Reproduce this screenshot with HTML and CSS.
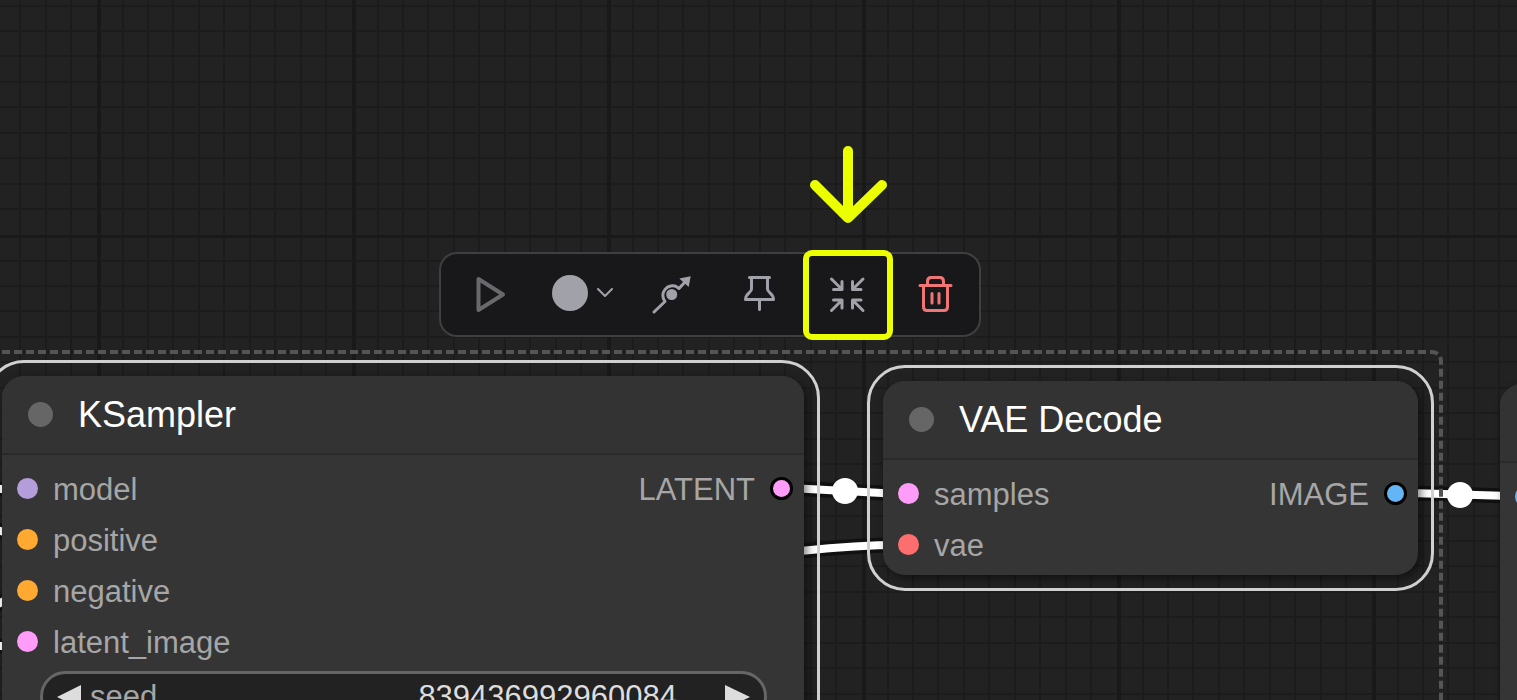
FILE: index.html
```html
<!DOCTYPE html>
<html lang="en">
<head>
<meta charset="utf-8">
<title>Node graph</title>
<link rel="stylesheet" href="styles.css">
</head>
<body>
<main class="canvas">
  <svg class="layer" aria-hidden="true">
    <defs>
      <pattern id="grid" x="97" y="235" width="255" height="255" patternUnits="userSpaceOnUse">
        <path class="grid-minor" d="M26 0V255M51 0V255M76 0V255M102 0V255M127 0V255M153 0V255M178 0V255M204 0V255M229 0V255M0 26H255M0 51H255M0 76H255M0 102H255M0 127H255M0 153H255M0 178H255M0 204H255M0 229H255"/>
        <path class="grid-major" d="M2 0V255M0 1H255"/>
      </pattern>
    </defs>
    <rect width="100%" height="100%" fill="url(#grid)"/>
    <g class="link-edge">
      <path d="M790 488L900 494M790 552C820 549 850 545 900 545M1410 493L1510 496M-10 489H8M-10 528L8 533M-10 608L8 599M-10 646H8"/>
    </g>
    <g class="link">
      <path d="M790 488L900 494M790 552C820 549 850 545 900 545M1410 493L1510 496M-10 489H8M-10 528L8 533M-10 608L8 599M-10 646H8"/>
    </g>
    <path class="group-outline" d="M-10 352H1431Q1441 352 1441 362V1200"/>
    <circle cx="845" cy="491" r="13" fill="#fff"/>
    <circle cx="1460" cy="495" r="13" fill="#fff"/>
  </svg>

  <section class="node node-sampler selected">
    <h2 class="node-title"><span class="state"></span>KSampler</h2>
    <div class="slots">
      <ul class="inputs">
        <li><span class="dot model"></span>model</li>
        <li><span class="dot conditioning"></span>positive</li>
        <li><span class="dot conditioning"></span>negative</li>
        <li><span class="dot latent"></span>latent_image</li>
      </ul>
      <ul class="outputs">
        <li>LATENT<span class="dot latent linked"></span></li>
      </ul>
    </div>
    <div class="widget">
      <button class="step" type="button" aria-label="Decrease seed"><svg width="26" height="26" viewBox="0 0 26 26"><path d="M1 13L25 1V25Z"/></svg></button>
      <label for="seed">seed</label>
      <input id="seed" type="text" value="839436992960084">
      <button class="step" type="button" aria-label="Increase seed"><svg width="26" height="26" viewBox="0 0 26 26"><path d="M25 13L0 1V25Z"/></svg></button>
    </div>
  </section>

  <section class="node node-decode selected">
    <h2 class="node-title"><span class="state"></span>VAE Decode</h2>
    <div class="slots">
      <ul class="inputs">
        <li><span class="dot latent"></span>samples</li>
        <li><span class="dot vae"></span>vae</li>
      </ul>
      <ul class="outputs">
        <li>IMAGE<span class="dot image linked"></span></li>
      </ul>
    </div>
  </section>

  <section class="node node-next">
    <div class="node-title"></div>
    <div class="slots"><ul class="inputs"><li><span class="dot image"></span></li></ul></div>
  </section>

  <div class="toolbar" role="toolbar" aria-label="Selection">
    <button class="tool run" type="button" aria-label="Run">
      <svg width="40" height="40" viewBox="0 0 40 40"><path d="M8.500 4V35L33 19.500Z"/></svg>
    </button>
    <button class="tool color" type="button" aria-label="Color">
      <span class="swatch"></span>
      <svg width="16" height="10" viewBox="0 0 16 10"><path class="thin" d="M1 1L8 8L15 1"/></svg>
    </button>
    <button class="tool" type="button" aria-label="Bypass">
      <svg width="40" height="40" viewBox="0 0 40 40"><path d="M3 37L14 26.500A9.600 9.600 0 0 1 26 12L28 13.500L34 7"/><path class="solid" d="M39.700 1.300L28.300 3.600L37.700 12Z"/><circle class="solid" cx="20.700" cy="19.500" r="5.500"/></svg>
    </button>
    <button class="tool" type="button" aria-label="Pin">
      <svg width="40" height="40" viewBox="0 0 40 40"><path d="M10.500 2.500H30.500M12.500 2.500V14C12.500 18 6.500 18 6.500 24.500H34.500C34.500 18 28.500 18 28.500 14V2.500M20.500 25V34.500"/></svg>
    </button>
    <button class="tool collapse" type="button" aria-label="Collapse">
      <svg width="40" height="40" viewBox="0 0 40 40"><path d="M4.500 4L14.500 14M6.500 14.500H15V6.500M36 4L26 14M34 14.500H25.500V6.500M4.500 35.500L14.500 25.500M6.500 25H15V33M36 35.500L26 25.500M34 25H25.500V33"/></svg>
    </button>
    <button class="tool delete" type="button" aria-label="Delete">
      <svg width="40" height="40" viewBox="0 0 40 40"><path d="M5 10.500H36M12.500 10V6.500Q12.500 2.500 16 2.500H25Q28.500 2.500 28.500 6.500V10M8.500 10.500V32Q8.500 35.500 12 35.500H29Q32.500 35.500 32.500 32V10.500M17 18.500V28M24 18.500V28"/></svg>
    </button>
  </div>

  <div class="highlight"></div>
  <svg class="pointer" width="80" height="80" viewBox="0 0 80 80" aria-hidden="true"><path d="M40 7V74M7 41L40 74L74 41"/></svg>
</main>
</body>
</html>
```
FILE: styles.css
```css
* { box-sizing: border-box; }

body {
  margin: 0;
  font-family: "Liberation Sans", Arial, sans-serif;
}

.canvas {
  position: relative;
  height: 100vh;
  overflow: hidden;
  background: #222;
}

.layer {
  position: absolute;
  inset: 0;
  width: 100%;
  height: 100%;
  fill: none;
}

.grid-minor { stroke: #1c1c1c; stroke-width: 2px; }
.grid-major { stroke: #191919; stroke-width: 4px; }
.link-edge { stroke: #111; stroke-width: 15px; }
.link { stroke: #fff; stroke-width: 8px; }
.group-outline { stroke: #555; stroke-width: 4px; stroke-dasharray: 8 4; }

/* Nodes */
.node {
  position: absolute;
  border-radius: 22px;
  background: #353535;
  box-shadow: 3px 3px 8px rgba(0, 0, 0, 0.5);
  color: #a6a6a6;
  font-size: 31px;
}

.node-sampler { left: 2px; top: 376px; width: 802px; padding-bottom: 400px; }
.node-decode { left: 883px; top: 381px; width: 535px; padding-bottom: 4px; }
.node-next { left: 1500px; top: 384px; width: 535px; padding-bottom: 600px; }

.selected::after {
  content: "";
  position: absolute;
  inset: -16px;
  border: 3px solid #d0d0d0;
  border-radius: 38px;
  pointer-events: none;
}

.node-title {
  display: flex;
  align-items: center;
  gap: 25px;
  height: 79px;
  margin: 0;
  padding: 0 26px;
  border-bottom: 2px solid #2a2a2a;
  border-radius: 22px 22px 0 0;
  background: #333;
  color: #fff;
  font-size: 36px;
  font-weight: 400;
}

.state {
  width: 25px;
  height: 25px;
  border-radius: 50%;
  background: #666;
}

.slots {
  display: flex;
  justify-content: space-between;
  padding: 9px 11px 0 15px;
}

.slots ul {
  margin: 0;
  padding: 0;
  list-style: none;
}

.slots li {
  display: flex;
  align-items: center;
  gap: 15px;
  height: 51px;
}

.dot {
  width: 21px;
  height: 21px;
  margin-bottom: 2px;
  border-radius: 50%;
}

.dot.linked {
  width: 23px;
  height: 23px;
  border: 3px solid #000;
}

.model { background: #b39ddb; }
.conditioning { background: #ffa931; }
.latent { background: #ff9cf9; }
.vae { background: #ff6e6e; }
.image { background: #64b5f6; }

.widget {
  display: flex;
  align-items: center;
  gap: 8px;
  height: 51px;
  margin: 3px 37px 0 38px;
  padding: 0 13px;
  border: 3px solid #666;
  border-radius: 26px;
  background: #222;
}

.widget input {
  flex: 1;
  min-width: 0;
  margin-right: 40px;
  padding: 0;
  border: 0;
  outline: 0;
  background: none;
  color: #ddd;
  font: inherit;
  text-align: right;
}

.step {
  display: flex;
  padding: 0;
  border: 0;
  background: none;
  fill: #ddd;
}

/* Selection toolbar */
.toolbar {
  position: absolute;
  left: 439px;
  top: 252px;
  display: flex;
  height: 85px;
  border: 2px solid #3f3f42;
  border-radius: 18px;
  background: #18181b;
}

.tool {
  display: flex;
  align-items: center;
  justify-content: center;
  width: 88px;
  padding: 0;
  border: 0;
  background: none;
  color: #a1a1aa;
}

.tool svg {
  fill: none;
  stroke: currentColor;
  stroke-width: 3px;
  stroke-linecap: round;
  stroke-linejoin: round;
}

.tool .thin { stroke-width: 2px; }
.tool .solid { fill: currentColor; stroke: none; }
.run { width: 98px; color: #68686d; }
.run svg { stroke-width: 4px; }
.color { gap: 9px; padding: 0 2px 4px 0; }
.delete { color: #f07575; }

.swatch {
  width: 36px;
  height: 36px;
  border-radius: 50%;
  background: #a1a1aa;
}

/* Callout */
.highlight {
  position: absolute;
  left: 803px;
  top: 250px;
  width: 90px;
  height: 90px;
  border: 6px solid #ebff00;
  border-radius: 9px;
  pointer-events: none;
}

.pointer {
  position: absolute;
  left: 808px;
  top: 144px;
  fill: none;
  stroke: #ebff00;
  stroke-width: 10px;
  stroke-linecap: round;
  stroke-linejoin: round;
}
```
